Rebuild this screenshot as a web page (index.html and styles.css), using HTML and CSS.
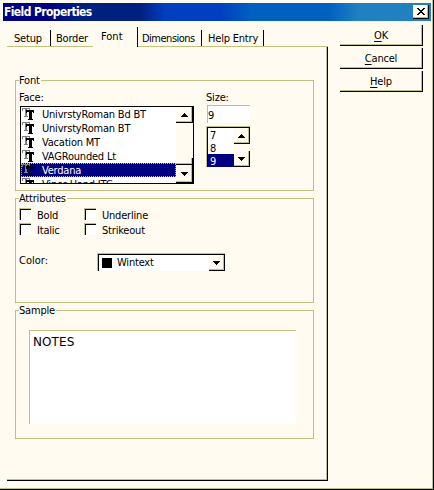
FILE: index.html
```html
<!DOCTYPE html>
<html lang="en">
<head>
<meta charset="utf-8">
<title>Field Properties</title>
<link rel="stylesheet" href="styles.css">
</head>
<body>
<svg width="0" height="0" class="defs" aria-hidden="true">
  <symbol id="up" viewBox="0 0 7 4"><path d="M3 0h1v1h1v1h1v1h1v1H0V3h1V2h1V1h1z"/></symbol>
  <symbol id="down" viewBox="0 0 7 4"><path d="M0 0h7v1H6v1H5v1H4v1H3V3H2V2H1V1H0z"/></symbol>
  <symbol id="tt" viewBox="0 0 13 13">
    <path fill="#808080" d="M0 0h8v3H7V1H5v7h1v1H2V8h1V1H1v2H0z"/>
    <path d="M4 2h8v3h-1V4h-1v7h1v1H6v-1h1V4H5v1H4z"/>
    <path d="M7 3h3v8H7z"/>
  </symbol>
</svg>
<main class="window">
  <header class="titlebar">
    <span class="title">Field Properties</span>
    <button class="close" aria-label="Close"><svg width="8" height="7" viewBox="0 0 8 7"><path d="M0 0h2v1h1v1h2V1h1V0h2v1H7v1H6v1H5v1h1v1h1v1h1v1H6V6H5V5H3v1H2v1H0V6h1V5h1V4h1V3H2V2H1V1H0z"/></svg></button>
  </header>
  <div class="content">
    <div class="notebook">
      <nav class="tabs">
        <span class="tab setup">Setup</span>
        <span class="tab border">Border</span>
        <span class="tab font active">Font</span>
        <span class="tab dims">Dimensions</span>
        <span class="tab help">Help Entry</span>
        <span class="rest"></span>
      </nav>
      <div class="panel">
        <section class="group font-group">
          <h2>Font</h2>
          <div class="pickers">
            <div>
              <div class="label">Face:</div>
              <div class="facelist">
                <div class="faces">
                  <div class="face"><svg><use href="#tt"/></svg><span>UnivrstyRoman Bd BT</span></div>
                  <div class="face"><svg><use href="#tt"/></svg><span>UnivrstyRoman BT</span></div>
                  <div class="face"><svg><use href="#tt"/></svg><span>Vacation MT</span></div>
                  <div class="face"><svg><use href="#tt"/></svg><span>VAGRounded Lt</span></div>
                  <div class="face selected"><svg><use href="#tt"/></svg><span>Verdana</span></div>
                  <div class="face"><svg><use href="#tt"/></svg><span>Viner Hand ITC</span></div>
                </div>
                <div class="scroll">
                  <span class="btn"><svg class="arrow"><use href="#up"/></svg></span>
                  <span class="btn thumb"></span>
                  <span class="btn"><svg class="arrow"><use href="#down"/></svg></span>
                </div>
              </div>
            </div>
            <div class="size">
              <div class="label">Size:</div>
              <div class="sizebox">9</div>
              <div class="sizelist">
                <div class="sizes"><div>7</div><div>8</div><div class="selected">9</div></div>
                <div class="scroll">
                  <span class="btn"><svg class="arrow"><use href="#up"/></svg></span>
                  <span class="btn"><svg class="arrow"><use href="#down"/></svg></span>
                </div>
              </div>
            </div>
          </div>
        </section>
        <section class="group attr-group">
          <h2>Attributes</h2>
          <div class="checks">
            <div class="check"><i></i><span>Bold</span></div>
            <div class="check"><i></i><span>Underline</span></div>
            <div class="check"><i></i><span>Italic</span></div>
            <div class="check"><i></i><span>Strikeout</span></div>
          </div>
          <div class="color">
            <span class="colorlabel">Color:</span>
            <div class="combo"><b></b><span>Wintext</span><span class="btn"><svg class="arrow"><use href="#down"/></svg></span></div>
          </div>
        </section>
        <section class="group sample-group">
          <h2>Sample</h2>
          <div class="sample">NOTES</div>
        </section>
      </div>
    </div>
    <aside class="actions">
      <button><span><u>O</u>K</span></button>
      <button><span><u>C</u>ancel</span></button>
      <button><span><u>H</u>elp</span></button>
    </aside>
  </div>
</main>
</body>
</html>
```

FILE: styles.css
```css
:root { --face: #fffbf0; --olive: #c0c080; --navy: #000080; }
* { box-sizing: border-box; }
body { margin: 0; font: 11px/16px "DejaVu Sans Condensed", "DejaVu Sans", sans-serif; font-stretch: condensed; color: #000; background: var(--face); letter-spacing: -0.2px; white-space: nowrap; overflow: hidden; }
.defs { position: absolute; }
svg { display: block; flex: none; shape-rendering: crispEdges; }
.window { width: 434px; height: 490px; padding: 3px 1px 0 3px; background: var(--face); border: solid #000; border-width: 0 1px 1px 0; box-shadow: inset -1px -1px var(--olive); }
.titlebar { width: 428px; height: 18px; display: flex; align-items: center; justify-content: space-between; padding: 0 2px 0 1px; background: linear-gradient(90deg, #000080 0 10%, #002080 18% 32%, #0040c0 38% 51%, #0060c0 58% 76%, #2080c0 83%); }
.title { color: #fff; font-weight: bold; font-size: 12px; letter-spacing: -0.6px; }
.close { width: 16px; height: 14px; padding: 0 0 0 4px; border: solid #000; border-width: 0 1px 1px 0; box-shadow: inset -1px -1px var(--olive); background: var(--face); }
.content { display: flex; }
.notebook { width: 321px; margin-left: 4px; }
.tabs { height: 26px; display: flex; align-items: flex-end; }
.tab { height: 17px; line-height: 17px; border-bottom: 1px solid var(--olive); box-shadow: inset -1px 0 #000; }
.setup { width: 44px; padding-left: 7px; }
.border { width: 42px; padding-left: 5px; box-shadow: none; }
.font { width: 45px; height: 20px; padding-left: 8px; line-height: 19px; border-bottom: 0; letter-spacing: 0; }
.dims { width: 64px; padding-left: 4px; letter-spacing: -0.5px; }
.help { width: 62px; padding-left: 6px; }
.rest { flex: 1; border-bottom: 1px solid var(--olive); }
.panel { width: 321px; height: 434px; padding: 33px 0 0 8px; border: solid #000; border-width: 0 1px 1px 0; box-shadow: inset -1px -1px var(--olive); }
.group { width: 299px; border: 1px solid var(--olive); padding-left: 3px; }
.group h2 { margin: -8px 0 0; font: inherit; width: max-content; height: 14px; background: var(--face); padding-right: 1px; }
.font-group { height: 111px; }
.attr-group { height: 105px; margin-top: 7px; }
.sample-group { height: 129px; margin-top: 7px; }
.pickers { display: flex; }
.label { margin-top: 3px; height: 14px; }
.facelist { width: 174px; height: 78px; margin: 2px 0 0 1px; display: flex; border: 1px solid #000; background: #fff; }
.faces { width: 155px; overflow: hidden; }
.face { height: 14px; display: flex; padding-left: 1px; }
.face svg { width: 13px; height: 13px; margin-top: 1px; margin-right: 7px; }
.face.selected { background: var(--navy); color: #fff; outline: 1px dotted var(--olive); outline-offset: -1px; }
.scroll { display: flex; flex-direction: column; justify-content: space-between; background: var(--face); }
.facelist .scroll { width: 17px; }
.btn { width: 16px; height: 16px; display: flex; align-items: center; justify-content: center; background: var(--face); border: solid #000; border-width: 0 1px 1px 0; box-shadow: inset -1px -1px var(--olive); }
.facelist .btn { width: 17px; }
.facelist .btn:last-child { height: 18px; }
.facelist .thumb { height: 7px; margin: auto 0 0; }
.arrow { width: 7px; height: 4px; }
.size { margin-left: 12px; }
.sizebox { margin: 1px 0 0 1px; width: 43px; height: 18px; line-height: 19px; background: #fff; border: solid var(--olive); border-width: 1px 0 0 1px; }
.sizelist { width: 44px; height: 41px; margin-top: 3px; padding: 1px 0 0 1px; display: flex; background: #fff; border: solid var(--olive); border-width: 1px 0 0 1px; box-shadow: inset 1px 1px #000, inset 0 -1px #000; }
.sizes { width: 27px; line-height: 15px; }
.sizes div { padding-left: 2px; height: 13px; }
.sizes .selected { background: var(--navy); color: #fff; }
.checks { display: grid; grid-template-columns: 65px 80px; grid-auto-rows: 15px; margin-top: 3px; }
.check { display: flex; }
.check i { width: 12px; height: 12px; background: #fff; border: solid var(--olive); border-width: 1px 0 0 1px; box-shadow: inset 1px 1px #000; }
.check span { margin: 0 0 0 6px; }
.color { display: flex; margin-top: 15px; }
.colorlabel { width: 78px; letter-spacing: 0; }
.combo { width: 128px; height: 18px; display: flex; align-items: center; padding: 1px 0 0 4px; background: #fff; border: solid var(--olive); border-width: 1px 0 0 1px; box-shadow: inset 1px 1px #000; }
.combo b { width: 10px; height: 10px; background: #000; margin-right: 5px; }
.combo .btn { margin-left: auto; }
.sample { width: 267px; height: 94px; margin: 13px 0 0 10px; padding: 3px 0 0 3px; background: #fff; border: solid var(--olive); border-width: 1px 0 0 1px; font-family: "DejaVu Sans", sans-serif; font-stretch: normal; font-size: 12px; letter-spacing: 0.1px; }
.actions { display: flex; flex-direction: column; gap: 2px; margin: 4px 0 0 12px; }
.actions button { width: 83px; height: 21px; padding: 2px 0 0; background: var(--face); border: solid #000; border-width: 0 1px 1px 0; box-shadow: inset -1px -1px var(--olive); font: inherit; letter-spacing: inherit; }
.actions u { text-underline-offset: 2px; }
```
